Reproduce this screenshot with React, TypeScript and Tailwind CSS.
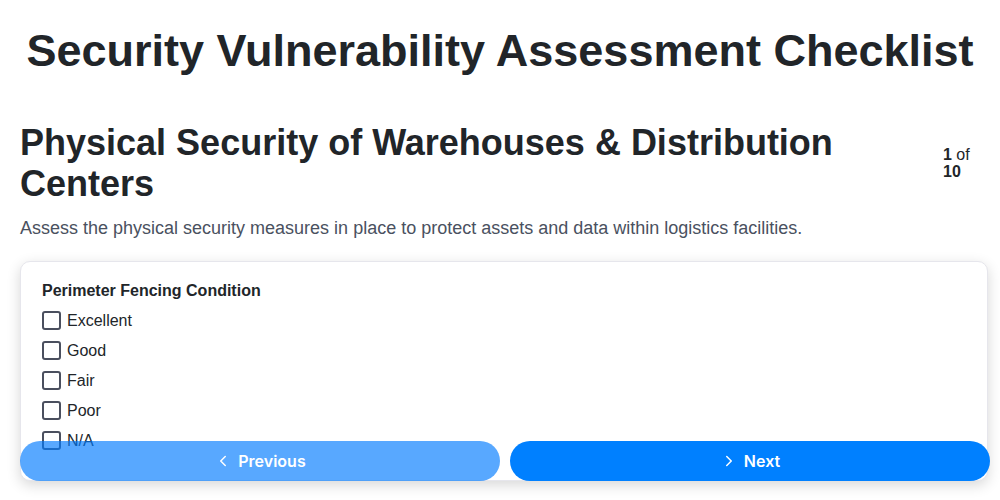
import React from "react";
import { ChevronLeft, ChevronRight } from "lucide-react";

const options = ["Excellent", "Good", "Fair", "Poor", "N/A"];

export default function App() {
  return (
    <div className="relative h-[500px] overflow-hidden bg-white px-5 text-[#212529] font-['Liberation_Sans',Arial,sans-serif]">
      <h1 className="whitespace-nowrap pt-[24px] text-center text-[45px] font-bold leading-[1.2]">
        Security Vulnerability Assessment Checklist
      </h1>
      <div className="mt-[44px] flex items-center justify-between">
        <h2 className="text-[36px] font-bold leading-[1.15]">
          Physical Security of Warehouses &amp; Distribution Centers
        </h2>
        <div className="ml-5 w-[37px] shrink-0 text-base leading-[17px]">
          <b>1</b> of <b>10</b>
        </div>
      </div>
      <p className="mt-[10px] text-[18px] leading-[1.5] text-[#4a5160]">
        Assess the physical security measures in place to protect assets and data within logistics facilities.
      </p>
      <div className="-mr-2 mt-[19px] h-[220px] overflow-hidden rounded-[10px] border border-[#e6e6ec] bg-white px-[21px] pt-[17px] shadow-[0_4px_14px_rgba(0,0,0,0.16)]">
        <div className="text-base font-bold leading-6">Perimeter Fencing Condition</div>
        <div className="mt-[3px] flex flex-col">
          {options.map((o) => (
            <label key={o} className="flex h-[30px] items-center gap-[6px] text-base">
              <span className="block h-[19px] w-[19px] rounded-[3px] border-2 border-[#4a4f5e] bg-white" />
              <span>{o}</span>
            </label>
          ))}
        </div>
      </div>
      <div className="absolute bottom-[19px] left-5 right-[10px] flex gap-[10px]">
        <button className="flex h-10 flex-1 items-center justify-center gap-[6px] rounded-full bg-[#007bff] text-base font-semibold text-white opacity-65 font-['Inter',sans-serif]">
          <ChevronLeft size={18} strokeWidth={2} />
          Previous
        </button>
        <button className="flex h-10 flex-1 items-center justify-center gap-[6px] rounded-full bg-[#0080ff] text-base font-semibold text-white font-['Inter',sans-serif]">
          <ChevronRight size={18} strokeWidth={2} />
          Next
        </button>
      </div>
    </div>
  );
}
